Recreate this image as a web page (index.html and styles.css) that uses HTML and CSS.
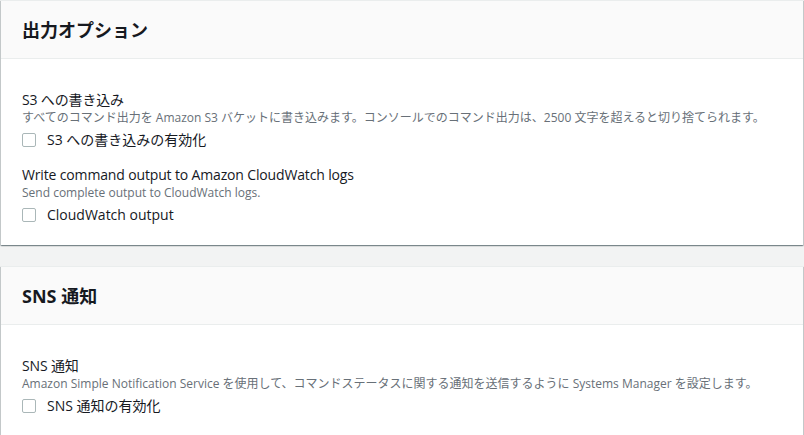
FILE: index.html
```html
<!DOCTYPE html>
<html lang="ja">
<head>
	<meta charset="UTF-8">
	<title>出力オプション</title>
	<link rel="stylesheet" href="styles.css">
</head>
<body>
	<div class="page">
		<div class="m-panel">
			<div class="hd"><h2>出力オプション</h2></div>
			<div class="bd">
				<div class="field">
					<div class="label">S3 への書き込み</div>
					<div class="desc">すべてのコマンド出力を Amazon S3 バケットに書き込みます。コンソールでのコマンド出力は、2500 文字を超えると切り捨てられます。</div>
					<label class="check"><span class="box"></span>S3 への書き込みの有効化</label>
				</div>
				<div class="field">
					<div class="label">Write command output to Amazon CloudWatch logs</div>
					<div class="desc">Send complete output to CloudWatch logs.</div>
					<label class="check"><span class="box"></span>CloudWatch output</label>
				</div>
			</div>
		</div>
		<div class="m-panel">
			<div class="hd"><h2>SNS 通知</h2></div>
			<div class="bd">
				<div class="field">
					<div class="label">SNS 通知</div>
					<div class="desc">Amazon Simple Notification Service を使用して、コマンドステータスに関する通知を送信するように Systems Manager を設定します。</div>
					<label class="check"><span class="box"></span>SNS 通知の有効化</label>
				</div>
			</div>
		</div>
	</div>
</body>
</html>
```

FILE: styles.css
```css
body {
	margin: 0;
	background: #f2f3f3;
	font-family: "Open Sans", "Noto Sans CJK JP", sans-serif;
	color: #16191f;
}
.page {
	padding: 0 1px 0 1px;
	height: 435px;
	overflow: hidden;
}
.m-panel {
	background: #fff;
	border-top: 1px solid #eaeded;
	box-shadow: 0 1px 1px 0 rgba(0, 28, 36, .3), 1px 1px 1px 0 rgba(0, 28, 36, .15), -1px 1px 1px 0 rgba(0, 28, 36, .15);
	margin-bottom: 21px;
}
.m-panel:last-child .bd {
	padding-bottom: 40px;
}
.m-panel .hd {
	background: #fafafa;
	border-bottom: 1px solid #eaeded;
	height: 57px;
	padding: 0 21px;
	display: flex;
	align-items: center;
}
.m-panel h2 {
	margin: 0;
	font-size: 18px;
	font-weight: 700;
	line-height: 22px;
}
.m-panel .bd {
	padding: 31px 21px 20px;
}
.field + .field {
	margin-top: 15px;
}
.field .label {
	font-size: 14px;
	line-height: 20px;
	letter-spacing: -0.15px;
}
.field .desc {
	font-size: 12px;
	line-height: 16px;
	color: #687078;
}
.check {
	display: flex;
	align-items: center;
	margin-top: 4px;
	font-size: 14px;
	line-height: 20px;
}
.check .box {
	width: 12px;
	height: 12px;
	border: 1px solid #aab7b8;
	border-radius: 2px;
	background: #fff;
	margin-right: 11px;
}
```
